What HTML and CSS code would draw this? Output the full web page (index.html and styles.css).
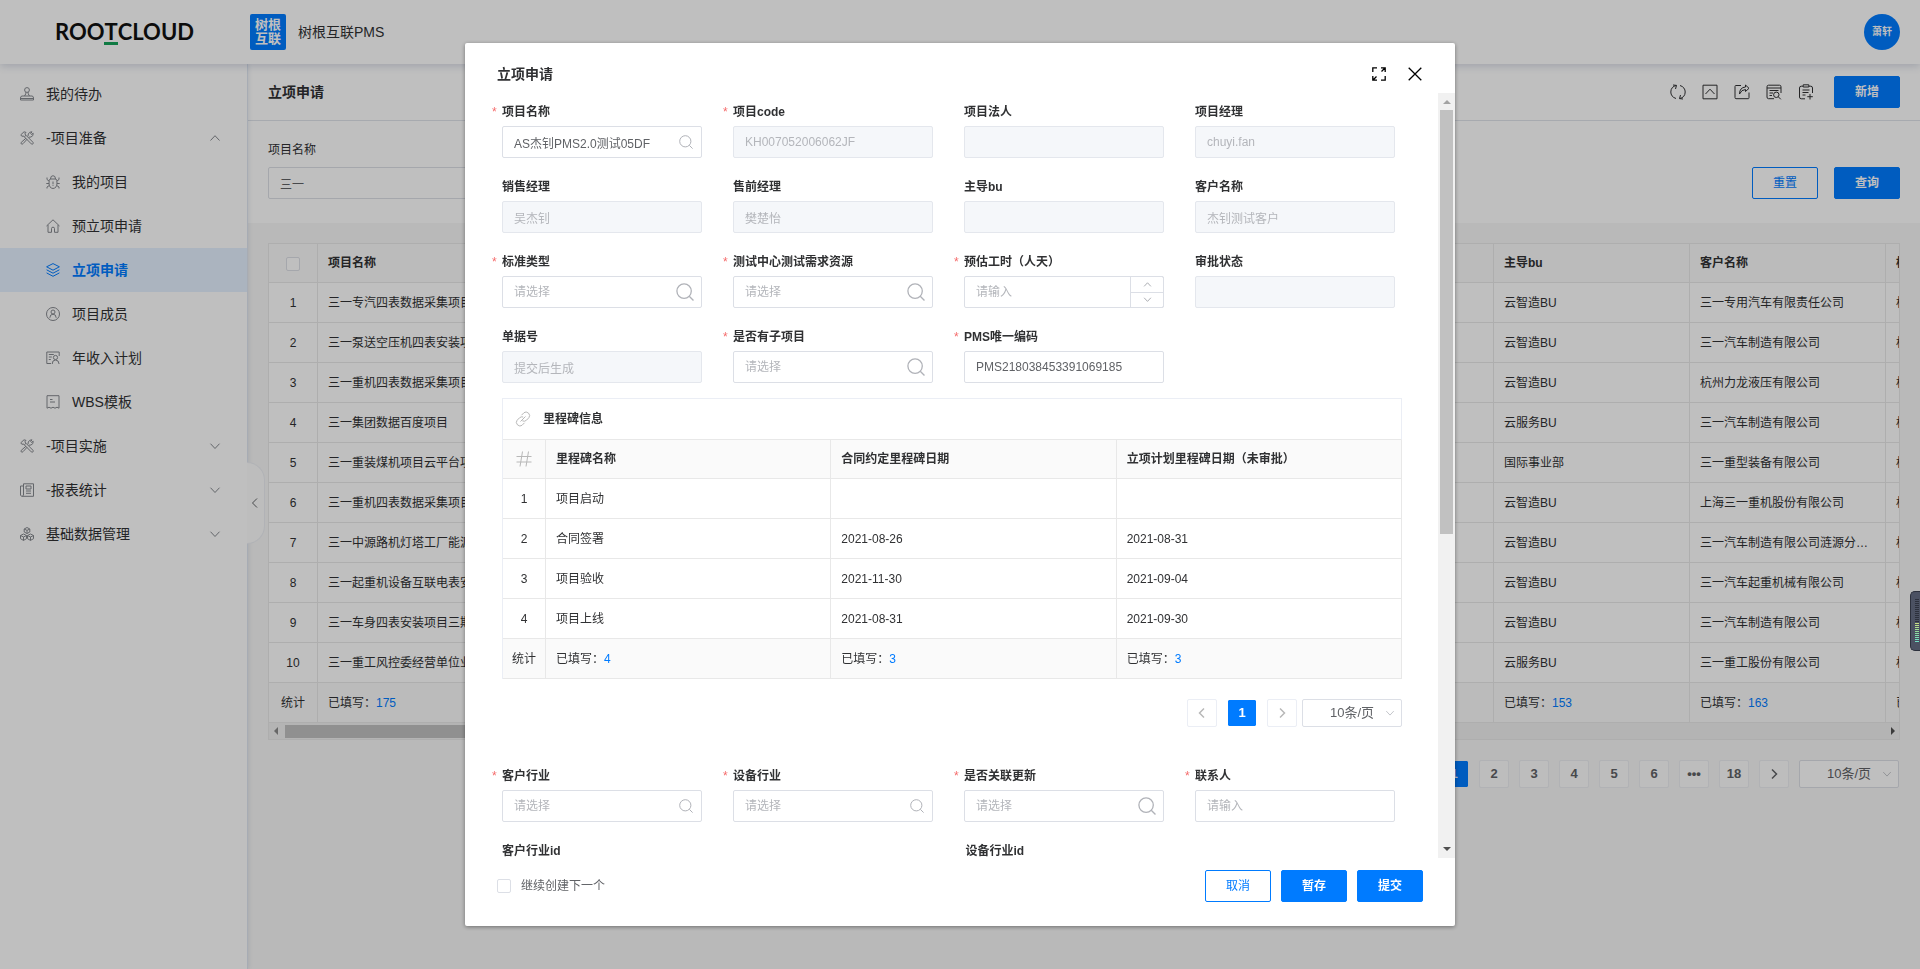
FILE: index.html
```html
<!DOCTYPE html>
<html lang="zh-CN">
<head>
<meta charset="utf-8">
<title>树根互联PMS</title>
<link rel="stylesheet" href="styles.css">
</head>
<body>
<svg class="sprite" aria-hidden="true">
  <symbol id="stamp" viewBox="0 0 14 14"><circle cx="7" cy="3" r="2.4"/><path d="M5.8 5.2v1.6L4.5 9M8.2 5.2v1.6L9.5 9M2 9h10q1.5.2 1.5 2v2H.5v-2Q.5 9.200 2 9zM.5 11.500h13"/></symbol>
  <symbol id="tools" viewBox="0 0 14 14"><path d="M.8 3.800L4 .8l2 .6-1.200 1.500L6 4.300 4.300 5.800 3 4.800 2 5.500zM6 4.300l7 7q.6.900-.1 1.600t-1.600 0L4.300 5.800M8 5.200l.3-2.200Q9.500.6 12 .8L10.700 2.500l.8 1L13.200 2.200Q13.600 5 11 6L8.800 6.200M6 7.200L1.300 11.300q-.7.800 0 1.600.9.700 1.700-.2L7 8.300"/></symbol>
  <symbol id="bug" viewBox="0 0 14 14"><path d="M4 4h6q1 1 1 4 0 5-4 5.500Q3 13 3 8q0-3 1-4zM4.500 4Q4.500.7 7 .7T9.500 4M3 6L1 4.500V2.500M3 8.500H.3M3.300 10.500L1 12v1.500M11 6l2-1.500V2.500M11 8.500h2.700M10.700 10.500L13 12v1.500M7 6.500v2.800M7 10.200v.8"/></symbol>
  <symbol id="home" viewBox="0 0 14 14"><path d="M.5 7L7 .8 13.500 7M2 6v7.300h3.500V9.500Q5.500 8.200 7 8.200t1.500 1.300v3.800H12V6"/></symbol>
  <symbol id="layers" viewBox="0 0 14 14"><path d="M7 .6l6.400 3.200L7 7.200.6 3.800zM.6 6.800L7 10.200l6.400-3.400M.6 9.900L7 13.300l6.400-3.400"/></symbol>
  <symbol id="member" viewBox="0 0 14 14"><circle cx="7" cy="7" r="6.500"/><circle cx="7" cy="5" r="2"/><path d="M3.800 10.800Q4 7.200 7 7.200t3.200 3.600"/></symbol>
  <symbol id="income" viewBox="0 0 14 14"><path d="M5 12.500H.8V1h12.400v4M2.800 3.500h5M2.800 6h3M2.800 8.500h2"/><circle cx="9.500" cy="6.500" r="2.100"/><path d="M6.200 13Q6.200 9 9.500 9t3.600 4"/></symbol>
  <symbol id="template" viewBox="0 0 14 14"><path d="M1 .7h12v12.500l-2-1-2 1-2-1-2 1-2-1-2 1zM4 4.500h2.500M4 7h5"/></symbol>
  <symbol id="report" viewBox="0 0 14 14"><path d="M3.500.8h10v12.500H1.500L.5 12V3h3zM3.500 3v9l-1 1.300M6 3h5v3H6zM6 8h5M6 10.300h5"/></symbol>
  <symbol id="cubes" viewBox="0 0 14 14"><path d="M7 .5l2.800 1.500v3L7 6.500 4.200 5V2zM4.200 2L7 3.400 9.800 2M7 3.400v3M3.500 7l3 1.500v3.200l-3 1.700-3-1.700V8.500zM.5 8.500l3 1.500 3-1.500M3.500 10v3.400M10.500 7l3 1.500v3.200l-3 1.700-3-1.700V8.500zM7.500 8.500l3 1.500 3-1.500M10.500 10v3.400"/></symbol>
  <symbol id="up" viewBox="0 0 12 12"><path d="M1.500 8.500L6 3.700l4.500 4.800"/></symbol>
  <symbol id="down" viewBox="0 0 12 12"><path d="M1.500 3.700L6 8.500l4.500-4.800"/></symbol>
  <symbol id="left" viewBox="0 0 12 12"><path d="M8 1.500L3.500 6 8 10.500"/></symbol>
  <symbol id="right" viewBox="0 0 12 12"><path d="M4 1.500L8.500 6 4 10.500"/></symbol>
  <symbol id="search" viewBox="0 0 14 14"><circle cx="6.300" cy="6.300" r="5.600"/><path d="M10.300 10.300l3.300 3.300"/></symbol>
  <symbol id="refresh" viewBox="0 0 16 16"><path d="M6 14.500C2.500 13.500.8 10.800.8 8 .8 4.500 3 2 6.300 1.500M3 1l3.500.4L5.500 5M10 1.500C13.500 2.500 15.200 5.200 15.200 8c0 3.500-2.200 6-5.500 6.500M13 15l-3.500-.4 1-3.600"/></symbol>
  <symbol id="collapse" viewBox="0 0 16 16"><path d="M1 1.200h14v13.600H1zM3.500 10L8 5.200 12.500 10"/></symbol>
  <symbol id="share" viewBox="0 0 16 16"><path d="M7 1.500H1.700Q1 1.500 1 2.500v11q0 1.200 1 1.200h12.300q.7 0 .7-1V8.500M11.500 1l3.500 3.300-3.500 3.200V5.500Q7.500 5.500 5.500 10 5.500 3.500 11.500 3z"/></symbol>
  <symbol id="logs" viewBox="0 0 16 16"><path d="M8 14.700H2.500Q1 14.700 1 13V2.800Q1 1.200 2.500 1.200h11q1.500 0 1.500 1.600V9M1 4h14M3.500 6.500h9M3.500 9H7M3.500 11.500h2.500"/><circle cx="10.300" cy="10.800" r="2.700"/><path d="M12.300 12.800l2.500 2.500"/></symbol>
  <symbol id="clip" viewBox="0 0 16 16"><path d="M5 2.200H3.200Q1.500 2.200 1.500 4v9q0 1.800 1.700 1.800H7M11 2.200h1.800q1.700 0 1.700 1.800v5M5.200.8h5.600V3H5.200zM4.500 6h7M4.500 8.500h6M4.500 11h3M12 10v5.500M9.300 12.700h5.500"/></symbol>
  <symbol id="full" viewBox="0 0 14 14"><path d="M.8 5V.8H5M9 .8h4.200V5M13.200.8L9.500 4.500M13.200 9v4.200H9M5 13.200H.8V9M.8 13.200l3.700-3.700"/></symbol>
  <symbol id="close" viewBox="0 0 14 14"><path d="M.7.7l12.600 12.600M13.300.7L.7 13.300"/></symbol>
  <symbol id="link" viewBox="0 0 16 16"><path d="M6.500 4.200L9 1.700q2-1.700 4.500.4 2.200 2.400.4 4.600L11.500 9.200Q9.500 11 7.300 9.800M9.500 11.800L7 14.300q-2 1.700-4.500-.4Q.3 11.500 2.100 9.300L4.500 6.800Q6.300 5.300 8.200 6M5.500 10.500l5-5"/></symbol>
  <symbol id="hash" viewBox="0 0 16 16"><path d="M6.500.5l-2.500 15M12.500.5L10 15.500M.5 5.500h15M.5 11h15"/></symbol>
</svg>

<header class="topbar">
  <div class="brand">ROO<span class="brand-t">T</span>CLOUD</div>
  <div class="app-logo"><span>树根</span><span>互联</span></div>
  <div class="app-name">树根互联PMS</div>
  <div class="avatar">萧轩</div>
</header>

<div class="shell">
  <nav class="sidebar">
    <a class="item" href="#"><svg class="i14"><use href="#stamp"/></svg>我的待办</a>
    <a class="item" href="#"><svg class="i14"><use href="#tools"/></svg>-项目准备<svg class="arrow"><use href="#up"/></svg></a>
    <a class="item sub" href="#"><svg class="i14"><use href="#bug"/></svg>我的项目</a>
    <a class="item sub" href="#"><svg class="i14"><use href="#home"/></svg>预立项申请</a>
    <a class="item sub active" href="#"><svg class="i14"><use href="#layers"/></svg>立项申请</a>
    <a class="item sub" href="#"><svg class="i14"><use href="#member"/></svg>项目成员</a>
    <a class="item sub" href="#"><svg class="i14"><use href="#income"/></svg>年收入计划</a>
    <a class="item sub" href="#"><svg class="i14"><use href="#template"/></svg>WBS模板</a>
    <a class="item" href="#"><svg class="i14"><use href="#tools"/></svg>-项目实施<svg class="arrow"><use href="#down"/></svg></a>
    <a class="item" href="#"><svg class="i14"><use href="#report"/></svg>-报表统计<svg class="arrow"><use href="#down"/></svg></a>
    <a class="item" href="#"><svg class="i14"><use href="#cubes"/></svg>基础数据管理<svg class="arrow"><use href="#down"/></svg></a>
    <button class="handle" aria-label="收起菜单"><svg class="i12"><use href="#left"/></svg></button>
  </nav>

  <main class="content">
    <div class="titlebar">
      <h1>立项申请</h1>
      <div class="actions">
        <button class="tool" aria-label="刷新"><svg class="i16"><use href="#refresh"/></svg></button>
        <button class="tool" aria-label="折叠"><svg class="i16"><use href="#collapse"/></svg></button>
        <button class="tool" aria-label="分享"><svg class="i16"><use href="#share"/></svg></button>
        <button class="tool" aria-label="日志"><svg class="i16"><use href="#logs"/></svg></button>
        <button class="tool" aria-label="导入"><svg class="i16"><use href="#clip"/></svg></button>
        <button class="btn primary">新增</button>
      </div>
    </div>
    <div class="filter">
      <div class="filter-field">
        <label for="q">项目名称</label>
        <input id="q" class="input" value="三一">
      </div>
      <div class="filter-actions">
        <button class="btn plain">重置</button>
        <button class="btn primary">查询</button>
      </div>
    </div>
    <div class="list">
      <div class="grid-wrap">
        <table class="grid main-grid">
          <colgroup><col class="c-no"><col><col><col><col><col><col><col><col><col></colgroup>
          <thead><tr><th class="mid"><input type="checkbox" class="check" aria-label="全选"></th><th>项目名称</th><th></th><th></th><th></th><th></th><th></th><th>主导bu</th><th>客户名称</th><th>标准类型</th></tr></thead>
          <tbody>
            <tr><td class="mid">1</td><td>三一专汽四表数据采集项目</td><td></td><td></td><td></td><td></td><td></td><td>云智造BU</td><td>三一专用汽车有限责任公司</td><td>标准</td></tr>
            <tr><td class="mid">2</td><td>三一泵送空压机四表安装项目</td><td></td><td></td><td></td><td></td><td></td><td>云智造BU</td><td>三一汽车制造有限公司</td><td>标准</td></tr>
            <tr><td class="mid">3</td><td>三一重机四表数据采集项目</td><td></td><td></td><td></td><td></td><td></td><td>云智造BU</td><td>杭州力龙液压有限公司</td><td>标准</td></tr>
            <tr><td class="mid">4</td><td>三一集团数据百度项目</td><td></td><td></td><td></td><td></td><td></td><td>云服务BU</td><td>三一汽车制造有限公司</td><td>标准</td></tr>
            <tr><td class="mid">5</td><td>三一重装煤机项目云平台项目</td><td></td><td></td><td></td><td></td><td></td><td>国际事业部</td><td>三一重型装备有限公司</td><td>标准</td></tr>
            <tr><td class="mid">6</td><td>三一重机四表数据采集项目</td><td></td><td></td><td></td><td></td><td></td><td>云智造BU</td><td>上海三一重机股份有限公司</td><td>标准</td></tr>
            <tr><td class="mid">7</td><td>三一中源路机灯塔工厂能源</td><td></td><td></td><td></td><td></td><td></td><td>云智造BU</td><td>三一汽车制造有限公司涟源分公司</td><td>标准</td></tr>
            <tr><td class="mid">8</td><td>三一起重机设备互联电表安装</td><td></td><td></td><td></td><td></td><td></td><td>云智造BU</td><td>三一汽车起重机械有限公司</td><td>标准</td></tr>
            <tr><td class="mid">9</td><td>三一车身四表安装项目三期</td><td></td><td></td><td></td><td></td><td></td><td>云智造BU</td><td>三一汽车制造有限公司</td><td>标准</td></tr>
            <tr><td class="mid">10</td><td>三一重工风控委经营单位业</td><td></td><td></td><td></td><td></td><td></td><td>云服务BU</td><td>三一重工股份有限公司</td><td>标准</td></tr>
          </tbody>
          <tfoot><tr><td class="mid">统计</td><td>已填写：<b>175</b></td><td></td><td></td><td></td><td></td><td></td><td>已填写：<b>153</b></td><td>已填写：<b>163</b></td><td>已填写：</td></tr></tfoot>
        </table>
        <div class="hscroll"><i class="tri-l"></i><div class="htrack"><div class="hthumb"></div></div><i class="tri-r"></i></div>
      </div>
      <div class="pager">
        <button class="page on">1</button><button class="page">2</button><button class="page">3</button><button class="page">4</button><button class="page">5</button><button class="page">6</button><button class="page">•••</button><button class="page">18</button><button class="page" aria-label="下一页"><svg class="i12"><use href="#right"/></svg></button>
        <span class="sizer"><select aria-label="每页条数"><option>10条/页</option></select><svg class="i10"><use href="#down"/></svg></span>
      </div>
    </div>
  </main>
</div>

<div class="mask">
  <section class="dialog" role="dialog" aria-labelledby="dlg-title">
    <div class="dlg-head">
      <h2 id="dlg-title">立项申请</h2>
      <button class="tool" aria-label="全屏"><svg class="i14 dark"><use href="#full"/></svg></button>
      <button class="tool" aria-label="关闭"><svg class="i14 dark"><use href="#close"/></svg></button>
    </div>
    <div class="dlg-main">
      <form class="dlg-body">
        <div class="fields">
          <div class="field"><label class="req" for="f1">项目名称</label><div class="box"><input id="f1" class="input" value="AS杰钊PMS2.0测试05DF"><svg class="s14"><use href="#search"/></svg></div></div>
          <div class="field"><label class="req" for="f2">项目code</label><div class="box"><input id="f2" class="input" value="KH007052006062JF" disabled></div></div>
          <div class="field"><label for="f3">项目法人</label><div class="box"><input id="f3" class="input" disabled></div></div>
          <div class="field"><label for="f4">项目经理</label><div class="box"><input id="f4" class="input" value="chuyi.fan" disabled></div></div>
          <div class="field"><label for="f5">销售经理</label><div class="box"><input id="f5" class="input" value="吴杰钊" disabled></div></div>
          <div class="field"><label for="f6">售前经理</label><div class="box"><input id="f6" class="input" value="樊楚怡" disabled></div></div>
          <div class="field"><label for="f7">主导bu</label><div class="box"><input id="f7" class="input" disabled></div></div>
          <div class="field"><label for="f8">客户名称</label><div class="box"><input id="f8" class="input" value="杰钊测试客户" disabled></div></div>
          <div class="field"><label class="req" for="f9">标准类型</label><div class="box"><input id="f9" class="input" placeholder="请选择"><svg class="s18"><use href="#search"/></svg></div></div>
          <div class="field"><label class="req" for="f10">测试中心测试需求资源</label><div class="box"><input id="f10" class="input" placeholder="请选择"><svg class="s18"><use href="#search"/></svg></div></div>
          <div class="field"><label class="req" for="f11">预估工时（人天）</label><div class="box"><input id="f11" class="input" placeholder="请输入"><div class="stepper"><button type="button" aria-label="增加"><svg class="i8"><use href="#up"/></svg></button><button type="button" aria-label="减少"><svg class="i8"><use href="#down"/></svg></button></div></div></div>
          <div class="field"><label for="f12">审批状态</label><div class="box"><input id="f12" class="input" disabled></div></div>
          <div class="field"><label for="f13">单据号</label><div class="box"><input id="f13" class="input" value="提交后生成" disabled></div></div>
          <div class="field"><label class="req" for="f14">是否有子项目</label><div class="box"><input id="f14" class="input" placeholder="请选择"><svg class="s18"><use href="#search"/></svg></div></div>
          <div class="field"><label class="req" for="f15">PMS唯一编码</label><div class="box"><input id="f15" class="input" value="PMS218038453391069185"></div></div>
        </div>

        <div class="milestone">
          <div class="ms-title"><svg class="i16 pale"><use href="#link"/></svg><h3>里程碑信息</h3></div>
          <table class="grid ms-grid">
            <colgroup><col class="c-ms"><col><col><col></colgroup>
            <thead><tr><th class="mid"><svg class="i16 pale"><use href="#hash"/></svg></th><th>里程碑名称</th><th>合同约定里程碑日期</th><th>立项计划里程碑日期（未审批）</th></tr></thead>
            <tbody>
              <tr><td class="mid">1</td><td>项目启动</td><td></td><td></td></tr>
              <tr><td class="mid">2</td><td>合同签署</td><td>2021-08-26</td><td>2021-08-31</td></tr>
              <tr><td class="mid">3</td><td>项目验收</td><td>2021-11-30</td><td>2021-09-04</td></tr>
              <tr><td class="mid">4</td><td>项目上线</td><td>2021-08-31</td><td>2021-09-30</td></tr>
            </tbody>
            <tfoot><tr><td class="mid">统计</td><td>已填写：<b>4</b></td><td>已填写：<b>3</b></td><td>已填写：<b>3</b></td></tr></tfoot>
          </table>
        </div>
        <div class="pager dlg-pager">
          <button type="button" class="page" aria-label="上一页"><svg class="i12 pale"><use href="#left"/></svg></button><button type="button" class="page on">1</button><button type="button" class="page" aria-label="下一页"><svg class="i12 pale"><use href="#right"/></svg></button>
          <span class="sizer"><select aria-label="每页条数"><option>10条/页</option></select><svg class="i10"><use href="#down"/></svg></span>
        </div>

        <div class="fields second">
          <div class="field"><label class="req" for="g1">客户行业</label><div class="box"><input id="g1" class="input" placeholder="请选择"><svg class="s14"><use href="#search"/></svg></div></div>
          <div class="field"><label class="req" for="g2">设备行业</label><div class="box"><input id="g2" class="input" placeholder="请选择"><svg class="s14"><use href="#search"/></svg></div></div>
          <div class="field"><label class="req" for="g3">是否关联更新</label><div class="box"><input id="g3" class="input" placeholder="请选择"><svg class="s18"><use href="#search"/></svg></div></div>
          <div class="field"><label class="req" for="g4">联系人</label><div class="box"><input id="g4" class="input" placeholder="请输入"></div></div>
        </div>
        <div class="halves">
          <div class="field"><label for="h1">客户行业id</label><div class="box"><input id="h1" class="input"></div></div>
          <div class="field"><label for="h2">设备行业id</label><div class="box"><input id="h2" class="input"></div></div>
        </div>
      </form>
      <div class="vscroll"><i class="tri-u"></i><div class="vtrack"><div class="vthumb"></div></div><i class="tri-d"></i></div>
    </div>
    <div class="dlg-foot">
      <label class="again"><input type="checkbox" class="check">继续创建下一个</label>
      <button class="btn plain">取消</button>
      <button class="btn primary">暂存</button>
      <button class="btn primary">提交</button>
    </div>
  </section>
</div>

<div class="meter" aria-hidden="true"><div class="bars"></div></div>
</body>
</html>
```
FILE: styles.css
```css
* { box-sizing: border-box; }
body {
  margin: 0;
  min-height: 100vh;
  overflow: hidden;
  display: flex;
  flex-direction: column;
  background: #f7f7f7;
  color: #303133;
  font: 12px/18px "Liberation Sans", "Noto Sans CJK SC", sans-serif;
}
button, input, select { font: inherit; color: inherit; margin: 0; padding: 0; }
h1, h2, h3 { margin: 0; font-size: 14px; font-weight: 700; }
svg { fill: none; stroke: currentColor; stroke-width: 1; flex: none; display: block; }
.sprite { display: none; }
.i8 { width: 9px; height: 9px; }
.i10 { width: 10px; height: 10px; }
.i12 { width: 12px; height: 12px; }
.i14 { width: 14px; height: 14px; }
.i16 { width: 16px; height: 16px; }
.pale { color: #b8b8b8; }
.dark { color: #000; stroke-width: 1.3; }

.topbar {
  position: relative;
  z-index: 2;
  height: 64px;
  display: flex;
  align-items: center;
  padding: 0 20px 0 55px;
  background: #fff;
  box-shadow: 0 2px 8px rgba(40, 60, 110, .2);
}
.brand {
  width: 195px;
  font: 700 22px/28px Lato, sans-serif;
  color: #111;
}
.brand-t { display: inline-block; line-height: 20px; border-bottom: 3px solid #16a35a; }
.app-logo {
  width: 36px;
  height: 36px;
  border-radius: 2px;
  background: #007bff;
  color: #fff;
  font-size: 13px;
  line-height: 14px;
  font-weight: 700;
  display: flex;
  flex-direction: column;
  align-items: center;
  justify-content: center;
}
.app-name { margin-left: 12px; font-size: 14px; line-height: 20px; }
.avatar {
  margin-left: auto;
  width: 36px;
  height: 36px;
  border-radius: 50%;
  background: #007bff;
  color: #fff;
  font-size: 10px;
  line-height: 36px;
  font-weight: 700;
  text-align: center;
}

.shell { flex: 1; display: flex; min-height: 0; }
.sidebar {
  position: relative;
  width: 248px;
  flex: none;
  padding-top: 8px;
  background: #fff;
  border-right: 1px solid #dfe6f0;
  box-shadow: 1px 0 4px rgba(40, 60, 110, .1);
}
.item {
  height: 44px;
  display: flex;
  align-items: center;
  gap: 12px;
  padding: 0 26px 0 20px;
  color: #303133;
  font-size: 14px;
  text-decoration: none;
}
.item svg { color: #85888e; }
.item.sub { padding-left: 46px; }
.item.active { background: #e5f1ff; color: #007bff; font-weight: 700; }
.item.active svg { color: #007bff; }
.item .arrow { width: 12px; height: 12px; margin-left: auto; }
.handle {
  position: absolute;
  left: 247px;
  top: 398px;
  width: 18px;
  height: 82px;
  padding-left: 2px;
  border: 1px solid #eceef3;
  border-left: 0;
  border-radius: 0 18px 18px 0;
  background: #fcfcfc;
  color: #606266;
}

.content { flex: 1; min-width: 0; }
.titlebar {
  height: 57px;
  display: flex;
  align-items: center;
  justify-content: space-between;
  padding: 0 20px;
  background: #fff;
  border-bottom: 1px solid #dfe3ea;
}
.actions { display: flex; align-items: center; gap: 16px; }
.actions .btn { margin-left: 4px; }
.tool { border: 0; background: none; display: flex; }
.btn {
  width: 66px;
  height: 32px;
  border: 1px solid #007bff;
  border-radius: 2px;
  font-size: 12px;
}
.primary { background: #007bff; color: #fff; font-weight: 700; }
.plain { background: #fff; color: #007bff; }
.filter {
  display: flex;
  justify-content: space-between;
  align-items: flex-end;
  padding: 20px 20px 24px;
  background: #fff;
}
.filter-field { width: 380px; display: flex; flex-direction: column; gap: 8px; }
.filter-actions { display: flex; gap: 16px; }
.input {
  width: 100%;
  height: 32px;
  padding: 0 11px;
  border: 1px solid #dcdfe6;
  border-radius: 2px;
  background: #fff;
  color: #606266;
  outline: 0;
}
.input::placeholder { color: #b4b6bb; opacity: 1; }
.input:disabled { background: #f5f7fa; border-color: #e4e7ed; color: #b4b6bb; }

.list { padding: 20px; }
.grid-wrap { border: 1px solid #e8e8e8; overflow: hidden; }
.grid { border-collapse: separate; border-spacing: 0; table-layout: fixed; }
.main-grid { width: 1813px; }
.c-no { width: 49px; }
.grid th, .grid td {
  height: 40px;
  padding: 0 10px;
  border-right: 1px solid #e8e8e8;
  border-bottom: 1px solid #e8e8e8;
  background: #fff;
  text-align: left;
  white-space: nowrap;
  overflow: hidden;
  text-overflow: ellipsis;
}
.grid th { height: 39px; background: #fafafa; font-weight: 700; }
.grid tfoot td { background: #fafafa; }
.grid .mid { padding: 0; text-align: center; }
.grid b { font-weight: 400; color: #007bff; }
.grid th svg { margin: 0 auto; }
.check {
  appearance: none;
  display: inline-block;
  flex: none;
  width: 14px;
  height: 14px;
  border: 1px solid #dcdfe6;
  border-radius: 2px;
  background: #fff;
  vertical-align: middle;
}
.hscroll { height: 16px; display: flex; align-items: center; background: #f1f1f1; }
.hscroll i, .vscroll i { flex: none; border: 4px solid transparent; }
.hscroll .tri-l { margin: 0 7px 0 1px; border-right-color: #8a8a8a; }
.hscroll .tri-r { margin: 0 0 0 8px; border-left-color: #505050; }
.htrack { flex: 1; }
.hthumb { width: 60%; height: 13px; background: #c1c1c1; }

.pager { display: flex; justify-content: flex-end; align-items: center; gap: 10px; padding: 20px 1px 0 0; }
.page {
  width: 30px;
  height: 28px;
  display: flex;
  align-items: center;
  justify-content: center;
  border: 1px solid #ebeef5;
  border-radius: 2px;
  background: #fff;
  color: #606266;
  font-size: 13px;
  font-weight: 700;
}
.list .page { border-color: #eceef2; background: #fcfcfc; }
.page svg { stroke-width: 1.5; }
.page.on { border-color: #fff; background: #007bff; color: #fff; background-clip: padding-box; }
.list .page.on { border-color: #f7f7f7; background-color: #007bff; background-clip: padding-box; }
.sizer { position: relative; }
.sizer select {
  appearance: none;
  width: 100px;
  height: 28px;
  display: block;
  padding-left: 27px;
  border: 1px solid #dcdfe6;
  border-radius: 2px;
  background: #fff;
  color: #606266;
  font-size: 13px;
}
.sizer svg { position: absolute; right: 7px; top: 9px; color: #b8bac0; }

.mask {
  position: fixed;
  inset: 0;
  z-index: 10;
  display: flex;
  align-items: stretch;
  justify-content: center;
  padding: 43px 20px;
  background: rgba(0, 0, 0, .25);
}
.dialog {
  width: 990px;
  display: flex;
  flex-direction: column;
  background: #fff;
  border-radius: 2px;
  box-shadow: 0 1px 4px rgba(0, 0, 0, .4);
}
.dlg-head { height: 50px; flex: none; display: flex; align-items: center; gap: 22px; padding: 12px 33px 0 32px; }
.dlg-head h2 { margin-right: auto; }
.dlg-main { flex: 1; min-height: 0; display: flex; }
.dlg-body { flex: 1; min-width: 0; overflow: hidden; padding: 10px 36px 0 37px; }
.fields { display: grid; grid-template-columns: repeat(4, 1fr); column-gap: 31px; row-gap: 20px; padding-right: 7px; }
.halves { display: grid; grid-template-columns: 1fr 1fr; column-gap: 33px; padding: 20px 6px 0 0; }
.field label { display: block; position: relative; height: 23px; font-weight: 700; white-space: nowrap; }
.req::before { content: "*"; position: absolute; left: -10px; top: 0; color: #f56c6c; font-weight: 400; }
.box { position: relative; }
.box > svg { position: absolute; color: #b0b2b8; }
.s14 { width: 14px; height: 14px; right: 9px; top: 9px; }
.s18 { width: 18px; height: 18px; right: 8px; top: 7px; }
.stepper {
  position: absolute;
  right: 0;
  top: 0;
  width: 34px;
  height: 32px;
  display: flex;
  flex-direction: column;
  border: 1px solid #dcdfe6;
  border-radius: 0 2px 2px 0;
}
.stepper button { flex: 1; display: flex; align-items: center; justify-content: center; border: 0; background: none; color: #909399; }
.stepper button + button { border-top: 1px solid #dcdfe6; }
.milestone { margin-top: 15px; border: 1px solid #ebeef5; border-bottom: 0; border-right: 0; }
.ms-title { height: 41px; display: flex; align-items: center; gap: 12px; padding-left: 12px; border-bottom: 1px solid #e8e8e8; border-right: 1px solid #ebeef5; }
.ms-title h3 { font-size: 12px; }
.ms-grid { width: 100%; }
.c-ms { width: 43px; }
.dlg-pager { padding-right: 0; }
.dlg-pager .sizer { margin-left: -5px; }
.second { margin-top: 40px; }
.vscroll { width: 17px; flex: none; display: flex; flex-direction: column; align-items: center; background: #f1f1f1; }
.vscroll .tri-u { margin: 3px 0 6px; border-bottom-color: #a3a3a3; }
.vscroll .tri-d { margin: 6px 0 3px; border-top-color: #505050; }
.vtrack { flex: 1; }
.vthumb { width: 13px; height: 58%; background: #c1c1c1; }
.dlg-foot { height: 68px; flex: none; display: flex; align-items: flex-start; gap: 10px; padding: 12px 32px 0; }
.again { margin-right: auto; height: 32px; display: flex; align-items: center; gap: 10px; color: #606266; }

.meter {
  position: fixed;
  right: 0;
  top: 61%;
  z-index: 20;
  width: 10px;
  height: 60px;
  padding: 7px 1px 7px 4px;
  border: 1px solid #2c303c;
  border-right: 0;
  border-radius: 5px 0 0 5px;
  background: #4b5162;
}
.bars {
  height: 100%;
  background:
    repeating-linear-gradient(transparent 0 1px, #4b5162 1px 2px),
    linear-gradient(#2c303c 0 52%, #d4e07c 52%, #8fdc9c 75%, #6be0cc);
}
```
